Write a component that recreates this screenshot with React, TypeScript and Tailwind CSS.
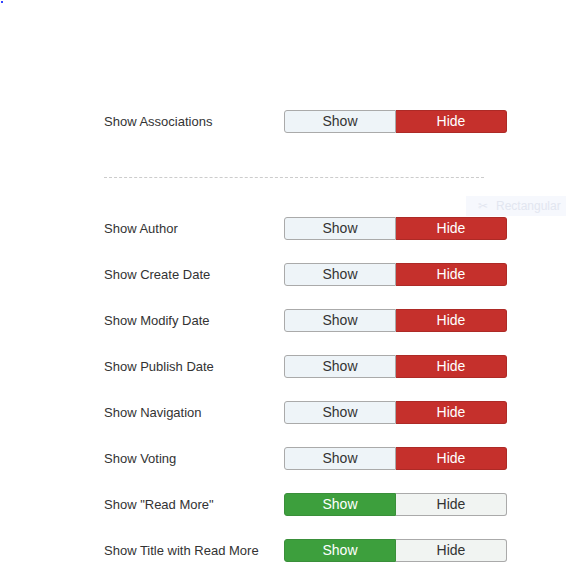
import React from "react";

interface ToggleRowProps {
  label: string;
  show: boolean;
}

function ToggleRow({ label, show }: ToggleRowProps) {
  return (
    <div className="flex items-center h-[23px]">
      <span className="w-[180px] text-[13px] text-[#333]">{label}</span>
      <div className="flex w-[223px] h-[23px] text-[14px]">
        <div
          className={`${
            show
              ? "bg-[#3d9f3d] text-white border-[#3a8f3a]"
              : "bg-[#eef4f8] text-[#333] border-[#aaa]"
          } flex-1 flex items-center justify-center rounded-l-[3px] border`}
        >
          Show
        </div>
        <div
          className={`${
            show
              ? "bg-[#f1f4f2] text-[#333] border-[#aaa]"
              : "bg-[#c5302c] text-white border-[#ad2a26]"
          } flex-1 flex items-center justify-center rounded-r-[3px] border border-l-0`}
        >
          Hide
        </div>
      </div>
    </div>
  );
}

const rows = [
  { label: "Show Author", show: false },
  { label: "Show Create Date", show: false },
  { label: "Show Modify Date", show: false },
  { label: "Show Publish Date", show: false },
  { label: "Show Navigation", show: false },
  { label: "Show Voting", show: false },
  { label: 'Show "Read More"', show: true },
  { label: "Show Title with Read More", show: true },
];

export default function App() {
  return (
    <div className="relative w-[566px] h-[578px] bg-white font-['Liberation_Sans',Arial,sans-serif]">
      <div className="absolute left-[1px] top-[1px] w-[2px] h-[2px] bg-[#3344ff]" />
      <div className="absolute left-[466px] top-[196px] w-[100px] h-[20px] flex items-center gap-2 pl-3 bg-[#f6f8fd] text-[12px] text-[#e2e6f0]">
        <span>✂</span>
        <span>Rectangular</span>
      </div>
      <div className="pl-[104px] pt-[110px]">
        <ToggleRow label="Show Associations" show={false} />
        <div className="w-[380px] border-t border-dashed border-[#ccc] mt-[44px] mb-[39px]" />
        <div className="flex flex-col gap-[23px]">
          {rows.map((r) => (
            <ToggleRow key={r.label} label={r.label} show={r.show} />
          ))}
        </div>
      </div>
    </div>
  );
}
